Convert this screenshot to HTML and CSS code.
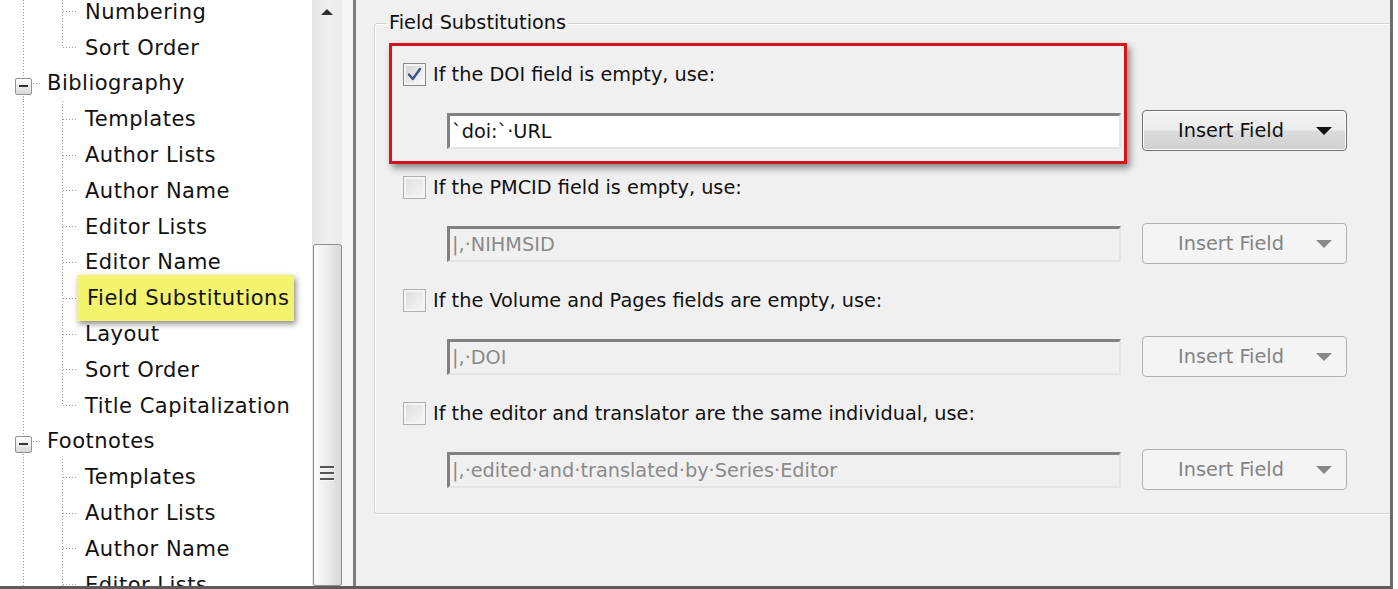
FILE: index.html
```html
<!doctype html>
<html>
<head>
  <meta charset="utf-8">
  <title>Field Substitutions</title>
  <link rel="stylesheet" href="styles.css">
</head>
<body>
  <div class="window">
    <div class="sidebar">
      <div class="tree">
        <div class="row child"><span class="branch"></span>Numbering</div>
        <div class="row child last"><span class="branch"></span>Sort Order</div>
        <div class="row top"><span class="toggle"></span><span class="branch"></span>Bibliography</div>
        <div class="row child"><span class="branch"></span>Templates</div>
        <div class="row child"><span class="branch"></span>Author Lists</div>
        <div class="row child"><span class="branch"></span>Author Name</div>
        <div class="row child"><span class="branch"></span>Editor Lists</div>
        <div class="row child"><span class="branch"></span>Editor Name</div>
        <div class="row child"><span class="branch short"></span><span class="mark">Field Substitutions</span></div>
        <div class="row child"><span class="branch"></span>Layout</div>
        <div class="row child"><span class="branch"></span>Sort Order</div>
        <div class="row child last"><span class="branch"></span>Title Capitalization</div>
        <div class="row top"><span class="toggle"></span><span class="branch"></span>Footnotes</div>
        <div class="row child"><span class="branch"></span>Templates</div>
        <div class="row child"><span class="branch"></span>Author Lists</div>
        <div class="row child"><span class="branch"></span>Author Name</div>
        <div class="row child"><span class="branch"></span>Editor Lists</div>
      </div>
      <div class="scrollbar">
        <div class="arrow"></div>
        <div class="thumb"><span class="grip"></span></div>
      </div>
      <div class="gutter"></div>
    </div>

    <div class="panel">
      <fieldset class="group">
        <legend>Field Substitutions</legend>
        <div class="items">
          <div class="item callout">
            <label class="check">
              <span class="box checked">
                <svg width="17" height="17" viewBox="0 0 17 17"><path d="M3 8.5 L6.8 13 L14 3" fill="none" stroke="#3d5189" stroke-width="2.4" stroke-linejoin="round" stroke-linecap="round"/></svg>
              </span>
              If the DOI field is empty, use:
            </label>
            <div class="field-row">
              <div class="input">`doi:`&middot;URL</div>
              <button class="insert">Insert Field <span class="caret"></span></button>
            </div>
          </div>

          <div class="item">
            <label class="check"><span class="box"></span>If the PMCID field is empty, use:</label>
            <div class="field-row">
              <div class="input disabled">|,&middot;NIHMSID</div>
              <button class="insert" disabled>Insert Field <span class="caret"></span></button>
            </div>
          </div>

          <div class="item">
            <label class="check"><span class="box"></span>If the Volume and Pages fields are empty, use:</label>
            <div class="field-row">
              <div class="input disabled">|,&middot;DOI</div>
              <button class="insert" disabled>Insert Field <span class="caret"></span></button>
            </div>
          </div>

          <div class="item">
            <label class="check"><span class="box"></span>If the editor and translator are the same individual, use:</label>
            <div class="field-row">
              <div class="input disabled">|,&middot;edited&middot;and&middot;translated&middot;by&middot;Series&middot;Editor</div>
              <button class="insert" disabled>Insert Field <span class="caret"></span></button>
            </div>
          </div>
        </div>
      </fieldset>
    </div>
  </div>
</body>
</html>
```

FILE: styles.css
```css
body {
  margin: 0;
  background: #fff;
  overflow: hidden;
}

.window {
  display: flex;
  width: 1390px;
  height: 586px;
  border-right: 3px solid #6b6b6b;
  border-bottom: 3px solid #5c5c5c;
  overflow: hidden;
}

/* Left: tree view */

.sidebar {
  display: flex;
  flex-shrink: 0;
  border-right: 3px solid #7c7c7c;
}

.tree {
  width: 312px;
  background: #fff;
  overflow: hidden;
  font-family: 'DejaVu Sans', sans-serif;
  font-size: 21px;
  letter-spacing: 0.5px;
  color: #111;
}

.tree .row:first-child {
  margin-top: -6px;
}

.row {
  display: flex;
  align-items: center;
  height: 35.8px;
  white-space: nowrap;
  --dots-v: repeating-linear-gradient(to bottom, #9a9a9a 0 1px, transparent 1px 3px);
  background: var(--dots-v) 23px 0 / 1px 100% no-repeat;
}

.row.child {
  background:
    var(--dots-v) 62px 0 / 1px 100% no-repeat,
    var(--dots-v) 23px 0 / 1px 100% no-repeat;
}

.row.child.last {
  background:
    var(--dots-v) 62px 0 / 1px 50% no-repeat,
    var(--dots-v) 23px 0 / 1px 100% no-repeat;
}

.branch {
  flex-shrink: 0;
  width: 15px;
  height: 1px;
  margin: 0 7px 0 63px;
  background: repeating-linear-gradient(to right, #9a9a9a 0 1px, transparent 1px 3px);
}

.branch.short {
  width: 14px;
  margin-right: 0;
}

.row.top .branch {
  width: 8px;
  margin: 0 6px 0 1px;
}

.toggle {
  flex-shrink: 0;
  box-sizing: border-box;
  width: 17px;
  height: 17px;
  margin: 6px 0 0 15px;
  border: 1px solid #939393;
  border-radius: 2px;
  background:
    linear-gradient(#333, #333) center / 9px 2px no-repeat,
    linear-gradient(#ffffff, #d9d9d9);
}

.mark {
  position: relative;
  z-index: 1;
  padding: 10px 5px 10px 10px;
  line-height: 26px;
  background: #f3f36e;
  box-shadow: 2px 3px 6px rgba(0, 0, 0, 0.45);
}

.scrollbar {
  display: flex;
  flex-direction: column;
  align-items: center;
  width: 30px;
  background: linear-gradient(to right, #e6e6e6, #f0f0f0 60%, #e9e9e9);
}

.arrow {
  width: 0;
  height: 0;
  margin-top: 9px;
  border-left: 6px solid transparent;
  border-right: 6px solid transparent;
  border-bottom: 6px solid #2e2e2e;
}

.thumb {
  display: flex;
  justify-content: center;
  box-sizing: border-box;
  width: 29px;
  height: 420px;
  margin-top: 229px;
  padding-top: 221px;
  border: 1px solid #8e8e8e;
  border-radius: 3px;
  background: linear-gradient(to right, #fbfbfb, #f0f0f0 40%, #d7d7d7);
}

.grip {
  width: 14px;
  height: 15px;
  background: repeating-linear-gradient(to bottom, #555 0 2px, #f4f4f4 2px 3px, transparent 3px 6px);
}

.gutter {
  width: 11px;
  background: #f6f6f6;
}

/* Right: field substitutions */

.panel {
  flex-grow: 1;
  min-width: 0;
  padding: 11px 0 0 18px;
  background: #f0f0f0;
  font-family: 'DejaVu Sans', sans-serif;
  font-size: 19.3px;
  color: #111;
}

.group {
  box-sizing: border-box;
  width: 1040px;
  height: 503px;
  margin: 0;
  padding: 0;
  border: 1px solid #d3d3d3;
  border-radius: 3px;
  box-shadow: inset 1px 1px 0 #fff, 1px 1px 0 #fff;
}

legend {
  margin-left: 12px;
  padding: 0 2px;
  line-height: 24px;
}

.items {
  display: flex;
  flex-direction: column;
  gap: 25px;
  padding: 28px 0 0 28px;
}

.item {
  display: flex;
  flex-direction: column;
  gap: 24px;
}

.callout {
  box-sizing: border-box;
  width: 738px;
  margin: -20px 0 -13px -14px;
  padding: 17px 0 10px 11px;
  border: 3px solid #d4141c;
  box-shadow: 3px 4px 7px rgba(0, 0, 0, 0.45);
}

.check {
  display: flex;
  align-items: center;
  gap: 7px;
  height: 23px;
  white-space: nowrap;
}

.box {
  display: flex;
  align-items: center;
  justify-content: center;
  box-sizing: border-box;
  width: 23px;
  height: 23px;
  border: 1px solid #b0b0b0;
  background: linear-gradient(135deg, #dedede, #f6f6f6);
  box-shadow: inset 0 0 0 2px #f4f4f4;
}

.box.checked {
  border-color: #8a8a8a;
  background: linear-gradient(135deg, #d2d2d2, #fbfbfb);
}

.field-row {
  display: flex;
  align-items: center;
  gap: 21px;
  width: 900px;
  height: 41px;
  margin-left: 44px;
}

.input {
  box-sizing: border-box;
  flex-shrink: 0;
  width: 674px;
  height: 36px;
  padding: 4px 0 0 2px;
  border-top: 3px solid #818181;
  border-left: 3px solid #818181;
  border-right: 2px solid #e4e4e4;
  border-bottom: 2px solid #e4e4e4;
  background: #fff;
  white-space: nowrap;
  overflow: hidden;
}

.input.disabled {
  background: #f0f0f0;
  color: #8a8a8a;
}

.insert {
  display: flex;
  align-items: center;
  flex-shrink: 0;
  box-sizing: border-box;
  width: 205px;
  height: 41px;
  padding: 0 14px 0 35px;
  border: 1px solid #707070;
  border-radius: 4px;
  background: linear-gradient(#f3f3f3, #ebebeb 48%, #dcdcdc 52%, #d0d0d0);
  box-shadow: inset 0 0 0 1px #fcfcfc;
  font: inherit;
  color: #111;
}

.insert:disabled {
  border-color: #adb2b5;
  background: #f4f4f4;
  box-shadow: none;
  color: #838383;
}

.caret {
  width: 0;
  height: 0;
  margin-left: auto;
  border-left: 8px solid transparent;
  border-right: 8px solid transparent;
  border-top: 8px solid #111;
}

.insert:disabled .caret {
  border-top-color: #888;
}
```
